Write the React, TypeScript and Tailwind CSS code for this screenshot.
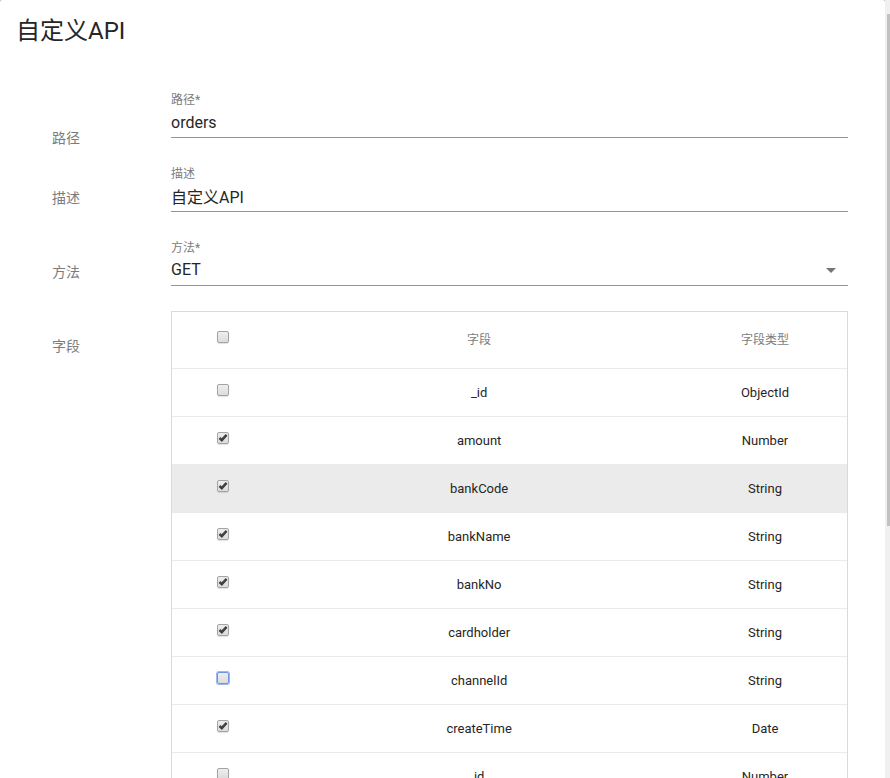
import { useState } from "react";

type Field = { name: string; type: string; checked: boolean };

const initialFields: Field[] = [
  { name: "_id", type: "ObjectId", checked: false },
  { name: "amount", type: "Number", checked: true },
  { name: "bankCode", type: "String", checked: true },
  { name: "bankName", type: "String", checked: true },
  { name: "bankNo", type: "String", checked: true },
  { name: "cardholder", type: "String", checked: true },
  { name: "channelId", type: "String", checked: false },
  { name: "createTime", type: "Date", checked: true },
  { name: "id", type: "Number", checked: false },
];

function Checkbox({
  label,
  checked,
  focused = false,
  onChange,
}: {
  label: string;
  checked: boolean;
  focused?: boolean;
  onChange: () => void;
}) {
  const look = focused
    ? "border-[#6f93dc] ring-1 ring-[#9dbaf0]"
    : "border-[#a3a3a3] shadow-[0_1px_1px_rgba(0,0,0,0.12)]";
  return (
    <div className="relative mx-auto size-3">
      <input
        type="checkbox"
        aria-label={label}
        checked={checked}
        onChange={onChange}
        className={`block size-3 appearance-none rounded-[2px] border bg-linear-to-b from-[#eeeeee] to-[#dcdcdc] ${look}`}
      />
      {checked && (
        <svg viewBox="0 0 12 12" className="pointer-events-none absolute inset-0 size-3" aria-hidden="true">
          <path d="M2.5 6 4.8 8.2 9.6 2.8" fill="none" stroke="#404040" strokeWidth="2.5" />
        </svg>
      )}
    </div>
  );
}

function Row({ label, first = false, children }: { label: string; first?: boolean; children: React.ReactNode }) {
  return (
    <div className="flex">
      <div className={`w-[119px] shrink-0 text-sm leading-5 text-[#7c7c7c] ${first ? "pt-16" : "pt-[50px]"}`}>{label}</div>
      <div className="min-w-0 flex-1 pt-[25px]">{children}</div>
    </div>
  );
}

const control = "block h-8 w-full appearance-none border-b border-[#949494] bg-transparent text-base leading-6 text-[#262626] outline-none";
const caption = "block h-[17px] pt-px text-xs leading-5 text-[#7c7c7c]";

export default function App() {
  const [path, setPath] = useState("orders");
  const [description, setDescription] = useState("自定义API");
  const [method, setMethod] = useState("GET");
  const [fields, setFields] = useState(initialFields);

  const toggle = (name: string) =>
    setFields(fields.map((f) => (f.name === name ? { ...f, checked: !f.checked } : f)));
  const all = fields.every((f) => f.checked);

  return (
    <div className="flex h-screen overflow-hidden bg-[#b0b0b0] font-[Roboto,'Noto_Sans_CJK_SC',sans-serif] text-[#262626]">
      <main className="min-w-0 flex-1 overflow-hidden rounded-t-[2px] bg-white">
        <h1 className="px-4 pt-[15px] text-2xl leading-8">自定义API</h1>
        <form className="pt-[17px] pr-[37px] pl-[52px]">
          <Row label="路径" first>
            <label htmlFor="path" className={caption}>路径*</label>
            <input id="path" value={path} onChange={(e) => setPath(e.target.value)} className={`${control} pt-[2px]`} />
          </Row>
          <div className="-mt-[10px]">
            <Row label="描述">
              <label htmlFor="description" className={caption}>描述</label>
              <input id="description" value={description} onChange={(e) => setDescription(e.target.value)} className={control} />
            </Row>
          </div>
          <Row label="方法">
            <label htmlFor="method" className={caption}>方法*</label>
            <div className="relative">
              <select id="method" value={method} onChange={(e) => setMethod(e.target.value)} className={control}>
                <option>GET</option>
                <option>POST</option>
              </select>
              <svg viewBox="0 0 10 5" className="pointer-events-none absolute top-[14px] right-3 h-[5px] w-[10px]" aria-hidden="true">
                <path d="M0 0h10L5 5z" fill="#757575" />
              </svg>
            </div>
          </Row>
          <Row label="字段">
            <div className="border border-[#dadada]">
              <table className="w-full table-fixed border-separate border-spacing-0 text-center text-[13px]">
                <colgroup>
                  <col className="w-[15%]" />
                  <col />
                  <col className="w-[24%]" />
                </colgroup>
                <thead>
                  <tr className="h-[57px] text-xs text-[#7c7c7c]">
                    <th className="border-b border-[#ebebeb] p-0 pb-[7px]">
                      <Checkbox
                        label="全选"
                        checked={all}
                        onChange={() => setFields(fields.map((f) => ({ ...f, checked: !all })))}
                      />
                    </th>
                    <th className="border-b border-[#ebebeb] p-0 font-normal">字段</th>
                    <th className="border-b border-[#ebebeb] p-0 pr-[2px] font-normal">字段类型</th>
                  </tr>
                </thead>
                <tbody>
                  {fields.map((f) => (
                    <tr key={f.name} className={`h-12 ${f.name === "bankCode" ? "bg-[#ebebeb]" : ""}`}>
                      <td className="border-b border-[#ebebeb] p-0 pb-1.5">
                        <Checkbox
                          label={f.name}
                          checked={f.checked}
                          focused={f.name === "channelId"}
                          onChange={() => toggle(f.name)}
                        />
                      </td>
                      <td className="border-b border-[#ebebeb] p-0">{f.name}</td>
                      <td className="border-b border-[#ebebeb] p-0 pr-[2px]">{f.type}</td>
                    </tr>
                  ))}
                </tbody>
              </table>
            </div>
          </Row>
        </form>
      </main>
      <div className="w-[5px] shrink-0 bg-[#f0f0f0] pt-[14px] pl-[2px]" aria-hidden="true">
        <div className="h-[67%] bg-[#c1c1c1]" />
      </div>
    </div>
  );
}
